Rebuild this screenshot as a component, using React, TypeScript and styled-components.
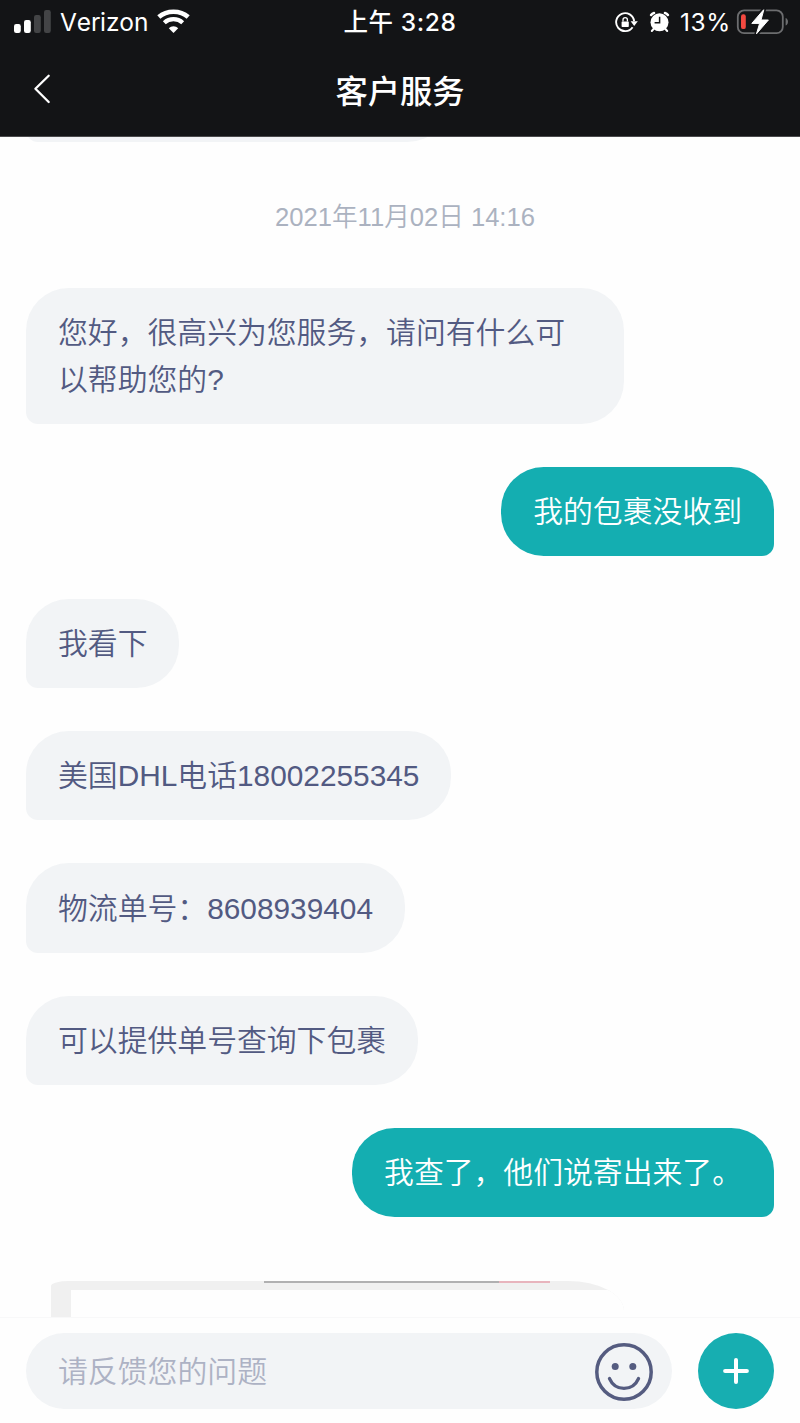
import React from 'react';
import styled, { createGlobalStyle, css } from 'styled-components';

const GlobalStyle = createGlobalStyle`
  *, *::before, *::after { box-sizing: border-box; }
  html, body { margin: 0; padding: 0; background: #fefefe; }
  body {
    font-family: 'Liberation Sans', 'Noto Sans CJK SC', sans-serif;
    font-weight: 350;
    font-kerning: none;
  }
`;

const Screen = styled.div`
  display: flex;
  flex-direction: column;
  width: 800px;
  height: 1423px;
  overflow: hidden;
  background: #fefefe;
`;

const Header = styled.header`
  flex: none;
  height: 136.5px;
  border-bottom: 1px solid #4a4a4c;
  background: #131416;
  color: #fff;
`;

const StatusBar = styled.div`
  display: grid;
  grid-template-columns: 1fr auto 1fr;
  align-items: center;
  height: 44px;
  padding: 0 11px 0 14px;
  font-family: Inter, 'Noto Sans CJK SC', sans-serif;
  font-size: 24.5px;
  font-weight: 400;
  line-height: 44px;
`;

const StatusLeft = styled.div`
  display: flex;
  align-items: center;
`;

const StatusRight = styled.div`
  display: flex;
  align-items: center;
  justify-content: flex-end;
`;

const Carrier = styled.span`
  margin: 0 9px 0 9px;
  letter-spacing: -0.1px;
`;

const Clock = styled.time`
  margin-right: 3px;
  font-weight: 500;
  letter-spacing: 0.6px;
  white-space: pre;
`;

const Percent = styled.span`
  margin: 0 5px 0 10px;
  letter-spacing: 0.6px;
`;

const NavBar = styled.nav`
  display: grid;
  grid-template-columns: 60px 1fr 60px;
  align-items: center;
  height: 92px;
`;

const BackButton = styled.button`
  display: flex;
  padding: 0 0 2px 33px;
  border: 0;
  background: none;
  color: inherit;
`;

const Title = styled.h1`
  margin: 0;
  padding-top: 3px;
  font-size: 32.3px;
  font-weight: 500;
  line-height: 48px;
  text-align: center;
`;

const Conversation = styled.main`
  flex: 1;
  min-height: 0;
  overflow: hidden;
  display: flex;
  flex-direction: column;
  padding: 0 26px;
`;

const bubbleShape = {
  agent: css`
    align-self: flex-start;
    border-radius: 42.67px 42.67px 42.67px 12px;
    background: #f2f4f6;
    color: #525a82;
  `,
  customer: css`
    align-self: flex-end;
    border-radius: 42.67px 42.67px 12px 42.67px;
    background: #14aeb1;
    color: #fff;
  `,
};

const Bubble = styled.div<{ $from: 'agent' | 'customer' }>`
  flex: none;
  max-width: 598.4px;
  margin-bottom: 42.9px;
  padding: 22.2px 32px 20.2px;
  font-size: 29.84px;
  line-height: 46.93px;
  ${({ $from }) => bubbleShape[$from]}
`;

const EarlierBubble = styled(Bubble)`
  width: 424px;
  height: 90px;
  margin: -84.5px 0 0;
`;

const DateLabel = styled.time`
  flex: none;
  margin: 56px 0 51.6px 10px;
  color: #abb2c0;
  font-size: 25.6px;
  font-kerning: normal;
  line-height: 38px;
  text-align: center;
`;

const ImageBubble = styled.div`
  flex: none;
  position: relative;
  width: 573px;
  height: 120px;
  margin: 21px 0 0 25px;
  padding: 9.5px 0 0 20px;
  border-radius: 18px 56px 0 0 / 5px 30px 0 0;
  background: #f0f0f0;
  overflow: hidden;
`;

const ImagePreview = styled.div`
  height: 110px;
  background: #fefefe;
`;

const PreviewEdge = styled.div`
  position: absolute;
  top: 0;
  left: 213px;
  width: 286px;
  height: 2px;
  background: linear-gradient(to right, #b0b0b1 82%, #e8b4bd 82%);
`;

const Composer = styled.footer`
  flex: none;
  display: flex;
  align-items: flex-start;
  gap: 25.5px;
  height: 106.5px;
  padding: 15px 25.7px 0 26px;
  border-top: 1.5px solid #f8f8f9;
  background: #fefefe;
`;

const InputPill = styled.div`
  flex: none;
  display: flex;
  align-items: center;
  justify-content: space-between;
  width: 646px;
  height: 76.5px;
  padding: 0 18px 0 32px;
  border-radius: 39px;
  background: #f2f4f6;
`;

const Placeholder = styled.span`
  padding-top: 2px;
  color: #adb2c4;
  font-size: 29.87px;
  line-height: 46px;
`;

const EmojiIcon = styled.svg`
  display: block;
  margin-top: 3px;
`;

const AddButton = styled.button`
  flex: none;
  display: flex;
  align-items: center;
  justify-content: center;
  width: 76.8px;
  height: 76.8px;
  padding: 0;
  border: 0;
  border-radius: 50%;
  background: #17aeb1;
`;

const Alarm = styled.svg`
  margin-left: 11px;
`;

const Signal = styled.svg`
  margin-bottom: 1px;
`;

const Wifi = styled.svg`
  margin-bottom: 2px;
`;

const SignalIcon = () => (
  <Signal width="37" height="24" viewBox="0 0 37 24">
    <rect x="0" y="14" width="6.8" height="9" rx="2.2" fill="#fff" />
    <rect x="10" y="10" width="6.8" height="13" rx="2.2" fill="#fff" />
    <rect x="20" y="5" width="6.8" height="18" rx="2.2" fill="#434446" />
    <rect x="30" y="0" width="6.8" height="23" rx="2.2" fill="#434446" />
  </Signal>
);

const WifiIcon = () => (
  <Wifi width="33" height="25" viewBox="0 0 33 25" fill="none" stroke="#fff">
    <path d="M1.8 8C9.8 .9 23.2 .9 31.2 8" strokeWidth="4.6" />
    <path d="M7.3 13.8C12.4 9 20.6 9 25.7 13.8" strokeWidth="4.2" />
    <path d="M16.5 24.1 11.8 19.2C14.3 16.5 18.7 16.5 21.2 19.2Z" fill="#fff" stroke="none" />
  </Wifi>
);

const RotationLockIcon = () => (
  <svg width="23" height="21" viewBox="0 0 23 21" fill="none">
    <path d="M17.6 15.2A9 9 0 1 1 19.1 9.2" stroke="#fff" strokeWidth="1.9" />
    <path d="M15.6 9.2H22.8L19.2 14Z" fill="#fff" />
    <rect x="6.6" y="9.4" width="7.2" height="5.6" rx=".7" fill="#fff" />
    <path d="M8 9.6V7.8a2.2 2.2 0 0 1 4.4 0V9.6" stroke="#fff" strokeWidth="1.3" />
  </svg>
);

const AlarmIcon = () => (
  <Alarm width="21" height="22" viewBox="0 0 21 22">
    <g stroke="#fff" strokeLinecap="round">
      <path d="M2.1 4Q3.2 2.4 5 2M16 2Q17.8 2.4 18.9 4" strokeWidth="2.6" fill="none" />
      <path d="M4.6 18 2.8 20M16.4 18l1.8 2" strokeWidth="2" />
    </g>
    <circle cx="10.5" cy="11.3" r="9" fill="#fff" />
    <path d="M10.6 5.8V11.8H5.6" stroke="#131416" strokeWidth="1.5" fill="none" />
  </Alarm>
);

const BatteryIcon = () => (
  <svg width="53" height="27" viewBox="0 0 53 27">
    <rect x="1.8" y="1.4" width="45" height="22.8" rx="6.3" fill="none" stroke="#6c6d6f" strokeWidth="1.8" />
    <path d="M49.6 9c3.2 1.2 3.2 6.4 0 7.6Z" fill="#6c6d6f" />
    <rect x="5" y="5.3" width="4.8" height="14.8" rx="2.2" fill="#f34940" />
    <path
      d="M27.6 .4 15.6 14.6h7.8L20.3 25.2 32.6 10.8h-7.4L28 .4Z"
      fill="#131416"
      stroke="#131416"
      strokeWidth="4"
    />
    <path
      d="M27.6 .8 15.8 14.4h7.8L20.5 24.8 32.4 11h-7.4L27.8 .8Z"
      fill="#fff"
      stroke="#fff"
      strokeWidth="1"
      strokeLinejoin="round"
    />
  </svg>
);

const BackIcon = () => (
  <svg width="18" height="30" viewBox="0 0 18 30" fill="none" stroke="#fff" strokeWidth="2.3" strokeLinecap="round" strokeLinejoin="round">
    <path d="M15.7 1.7 2.4 14.8 15.7 28" />
  </svg>
);

const SmileIcon = () => (
  <EmojiIcon width="60" height="60" viewBox="0 0 60 60" fill="none">
    <circle cx="30" cy="30" r="27.2" stroke="#555c80" strokeWidth="3.5" />
    <circle cx="21.2" cy="24.5" r="3.5" fill="#555c80" />
    <circle cx="38.8" cy="24.5" r="3.5" fill="#555c80" />
    <path d="M15.5 36.6C21.2 49.6 38.8 49.6 44.5 36.6" stroke="#555c80" strokeWidth="3.4" strokeLinecap="round" />
  </EmojiIcon>
);

const PlusIcon = () => (
  <svg width="28" height="28" viewBox="0 0 28 28" stroke="#fff" strokeWidth="4" strokeLinecap="round">
    <path d="M14 3.1V24.9M3.1 14H24.9" />
  </svg>
);

const messages: { from: 'agent' | 'customer'; text: string }[] = [
  { from: 'agent', text: '您好，很高兴为您服务，请问有什么可以帮助您的?' },
  { from: 'customer', text: '我的包裹没收到' },
  { from: 'agent', text: '我看下' },
  { from: 'agent', text: '美国DHL电话18002255345' },
  { from: 'agent', text: '物流单号：8608939404' },
  { from: 'agent', text: '可以提供单号查询下包裹' },
  { from: 'customer', text: '我查了，他们说寄出来了。' },
];

export default function App() {
  return (
    <Screen>
      <GlobalStyle />
      <Header>
        <StatusBar>
          <StatusLeft>
            <SignalIcon />
            <Carrier>Verizon</Carrier>
            <WifiIcon />
          </StatusLeft>
          <Clock>上午 3:28</Clock>
          <StatusRight>
            <RotationLockIcon />
            <AlarmIcon />
            <Percent>13%</Percent>
            <BatteryIcon />
          </StatusRight>
        </StatusBar>
        <NavBar>
          <BackButton aria-label="返回">
            <BackIcon />
          </BackButton>
          <Title>客户服务</Title>
        </NavBar>
      </Header>
      <Conversation>
        <EarlierBubble $from="agent" />
        <DateLabel>2021年11月02日 14:16</DateLabel>
        {messages.map((message) => (
          <Bubble key={message.text} $from={message.from}>
            {message.text}
          </Bubble>
        ))}
        <ImageBubble>
          <ImagePreview />
          <PreviewEdge />
        </ImageBubble>
      </Conversation>
      <Composer>
        <InputPill>
          <Placeholder>请反馈您的问题</Placeholder>
          <SmileIcon />
        </InputPill>
        <AddButton aria-label="添加">
          <PlusIcon />
        </AddButton>
      </Composer>
    </Screen>
  );
}
